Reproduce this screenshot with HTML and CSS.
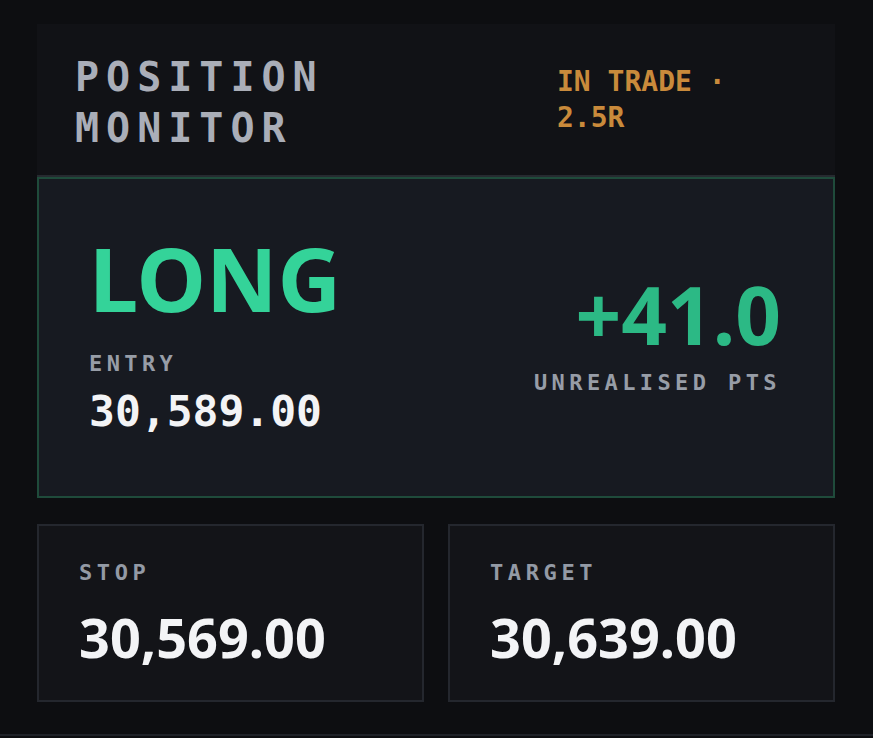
FILE: index.html
```html
<!DOCTYPE html>
<html lang="en">
<head>
<meta charset="utf-8">
<title>Position Monitor</title>
<link rel="stylesheet" href="styles.css">
</head>
<body>
  <main class="screen">
    <section class="panel">
      <header class="panel-head">
        <h1 class="title">POSITION MONITOR</h1>
        <div class="status">IN TRADE · 2.5R</div>
      </header>

      <div class="position">
        <div class="position-side">
          <div class="side">LONG</div>
          <div class="label">ENTRY</div>
          <div class="entry">30,589.00</div>
        </div>
        <div class="position-pnl">
          <div class="pnl">+41.0</div>
          <div class="label">UNREALISED PTS</div>
        </div>
      </div>

      <div class="levels">
        <div class="level">
          <div class="label">STOP</div>
          <div class="level-value">30,569.00</div>
        </div>
        <div class="level">
          <div class="label">TARGET</div>
          <div class="level-value">30,639.00</div>
        </div>
      </div>
    </section>
  </main>
</body>
</html>
```

FILE: styles.css
```css
* {
  box-sizing: border-box;
}

html,
body {
  margin: 0;
  padding: 0;
  background: #0d0e11;
}

body {
  width: 873px;
  height: 738px;
  overflow: hidden;
  font-family: "DejaVu Sans Mono", monospace;
}

.screen {
  height: 736px;
  padding: 24px 38px 0 37px;
  border-bottom: 2px solid #1f2228;
}

.panel {
  display: flex;
  flex-direction: column;
}

/* header strip */
.panel-head {
  display: flex;
  align-items: flex-start;
  justify-content: space-between;
  height: 153px;
  padding: 28px 40px 0 38px;
  background: #111216;
  border-bottom: 2px solid #262a30;
}

.title {
  margin: 0;
  max-width: 300px;
  font-size: 40px;
  line-height: 51px;
  font-weight: 700;
  letter-spacing: 0.175em;
  color: #aaaeb8;
}

.status {
  width: 238px;
  padding-right: 40px;
  margin-top: 12px;
  font-size: 28px;
  line-height: 36.4px;
  font-weight: 700;
  color: #c98a3b;
}

/* main position card */
.position {
  display: flex;
  align-items: center;
  justify-content: space-between;
  height: 321px;
  padding: 0 52px 0 50px;
  background: #171a21;
  border: 2px solid #1f4b3b;
}

.position-side {
  display: flex;
  flex-direction: column;
  margin-top: -4px;
}

.side {
  font-family: "Noto Sans", sans-serif;
  font-size: 88px;
  line-height: 88px;
  font-weight: 700;
  color: #34d399;
  margin-bottom: 29px;
}

.label {
  font-size: 22px;
  line-height: 26.4px;
  font-weight: 700;
  letter-spacing: 0.2em;
  color: #979da7;
}

.entry {
  margin-top: 9px;
  font-size: 43px;
  line-height: 51.6px;
  font-weight: 700;
  color: #f3f4f6;
}

.position-pnl {
  display: flex;
  flex-direction: column;
  align-items: flex-end;
  margin-top: -4px;
}

.pnl {
  font-family: "Noto Sans", sans-serif;
  font-size: 80px;
  line-height: 80px;
  font-weight: 700;
  color: #2cb985;
  margin-bottom: 16px;
}

/* stop / target row */
.levels {
  display: grid;
  grid-template-columns: 1fr 1fr;
  gap: 24px;
  margin-top: 26px;
}

.level {
  height: 178px;
  padding: 34px 40px 0 40px;
  background: #131418;
  border: 2px solid #24272e;
}

.level .label {
  color: #939aa5;
  letter-spacing: 0.21em;
}

.level-value {
  margin-top: 19px;
  font-family: "Noto Sans", sans-serif;
  font-size: 54px;
  line-height: 64.8px;
  font-weight: 700;
  color: #f3f4f6;
}
```
